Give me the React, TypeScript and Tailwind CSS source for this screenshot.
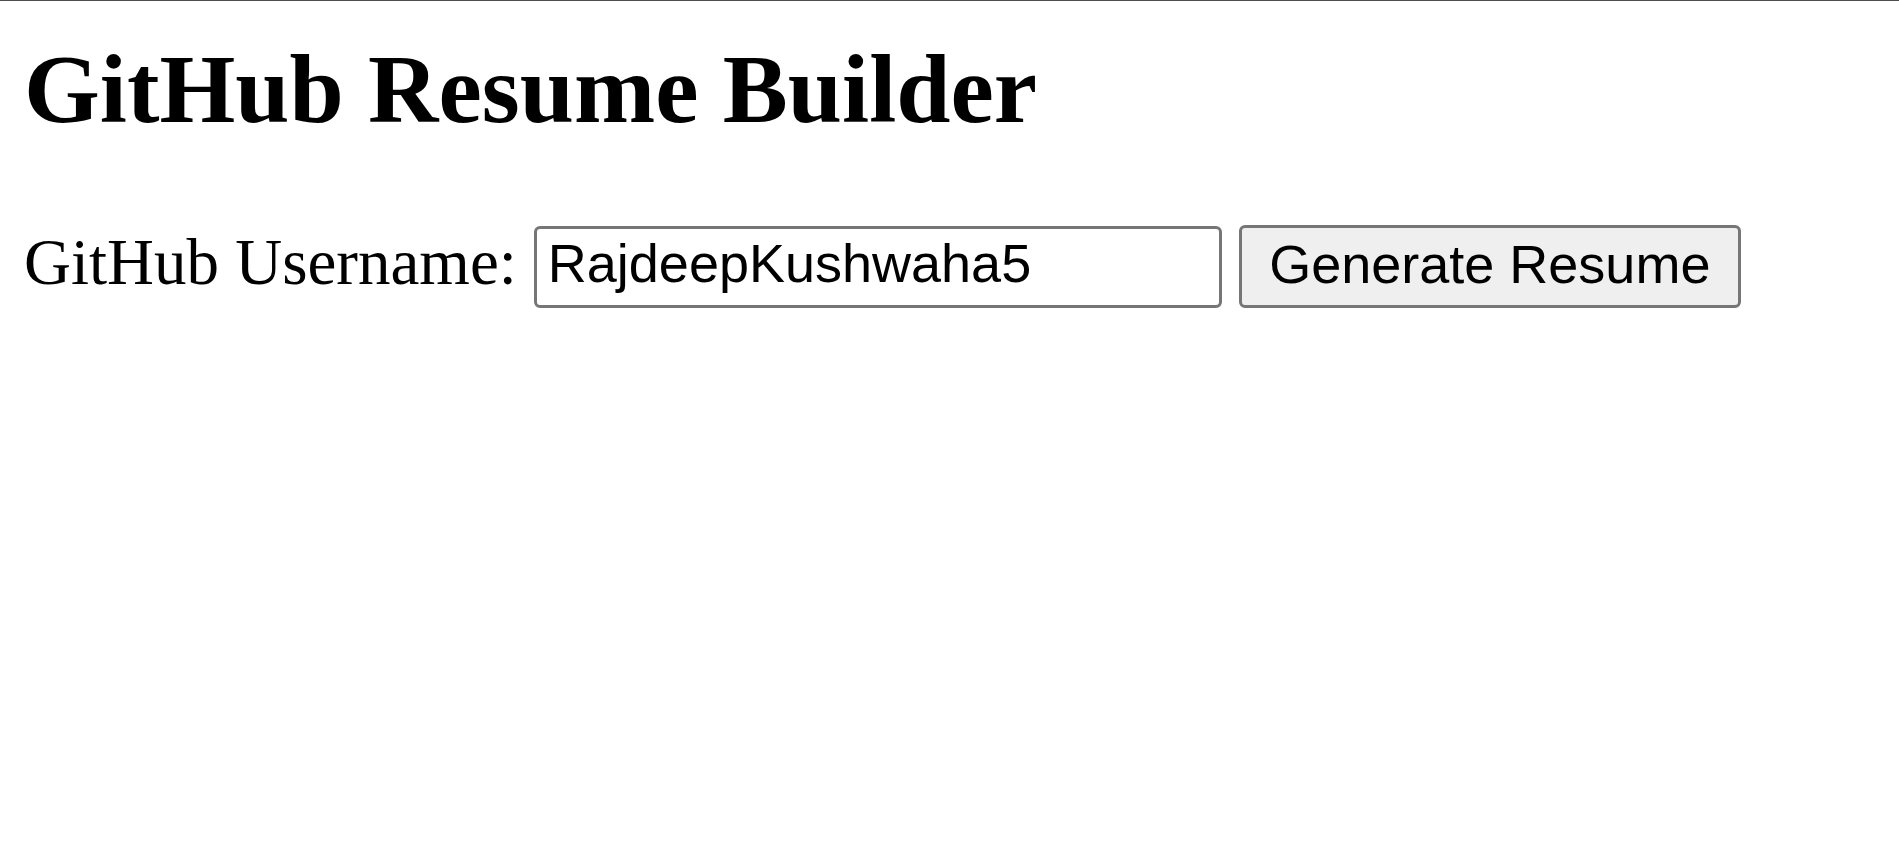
import { useState } from 'react';

export default function App() {
  const [username, setUsername] = useState('RajdeepKushwaha5');

  return (
    <div className="min-h-screen bg-white border-t border-[#4d4d4d] pl-[24px] text-black">
      <h1 className="mt-[40px] text-[97.5px] leading-[96px] font-bold font-['Liberation_Serif',serif] whitespace-nowrap">
        GitHub Resume Builder
      </h1>

      <div className="mt-[88px] flex items-start">
        <label
          htmlFor="username"
          className="mt-[5px] text-[65px] leading-[64px] font-['Liberation_Serif',serif] whitespace-nowrap"
        >
          GitHub Username:
        </label>
        <input
          id="username"
          value={username}
          onChange={(e) => setUsername(e.target.value)}
          className="ml-[17px] mt-px h-[82px] w-[688px] rounded-[6px] border-[3px] border-[#767676] bg-white pl-[11px] pb-[9px] text-[54px] font-['Liberation_Sans',Arial,sans-serif] outline-none"
        />
        <button
          type="button"
          className="ml-[17px] flex h-[83px] w-[502px] items-start justify-center rounded-[6px] border-[3px] border-[#767676] bg-[#efefef] pt-[6px] text-[54px] leading-[60px] font-['Liberation_Sans',Arial,sans-serif]"
        >
          Generate Resume
        </button>
      </div>
    </div>
  );
}
